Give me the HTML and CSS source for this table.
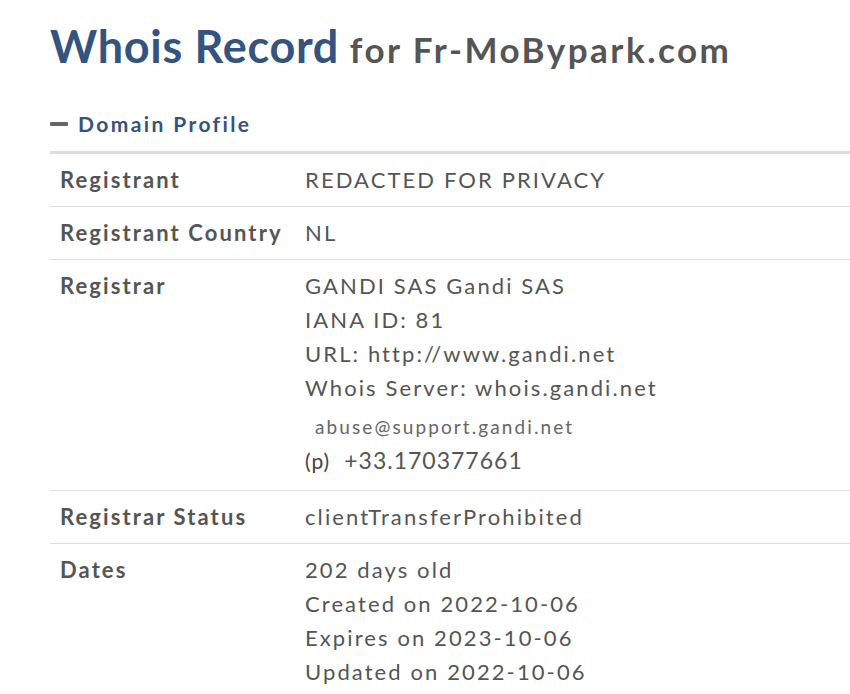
FILE: index.html
```html
<!DOCTYPE html>
<html>
<head>
<meta charset="utf-8">
<link rel="stylesheet" href="styles.css">
</head>
<body>
<div class="page">
  <h1 class="title"><span class="title-main">Whois Record</span> <span class="title-sub">for Fr-MoBypark.com</span></h1>
  <h2 class="section"><span class="minus"></span>Domain Profile</h2>
  <table class="profile">
    <tr>
      <th>Registrant</th>
      <td>REDACTED FOR PRIVACY</td>
    </tr>
    <tr>
      <th>Registrant Country</th>
      <td>NL</td>
    </tr>
    <tr>
      <th>Registrar</th>
      <td>
        <div>GANDI SAS Gandi SAS</div>
        <div>IANA ID: 81</div>
        <div>URL: http://www.gandi.net</div>
        <div>Whois Server: whois.gandi.net</div>
        <div class="img-line email">abuse@support.gandi.net</div>
        <div class="img-line phone"><span class="p">(p)</span><span class="num">+33.170377661</span></div>
      </td>
    </tr>
    <tr>
      <th>Registrar Status</th>
      <td>clientTransferProhibited</td>
    </tr>
    <tr>
      <th>Dates</th>
      <td>
        <div>202 days old</div>
        <div>Created on 2022-10-06</div>
        <div>Expires on 2023-10-06</div>
        <div>Updated on 2022-10-06</div>
      </td>
    </tr>
  </table>
</div>
</body>
</html>
```
FILE: styles.css
```css
html, body {
  margin: 0;
  padding: 0;
  background: #fff;
  overflow: hidden;
}
body {
  font-family: Lato, "Open Sans", sans-serif;
  color: #555;
}
.page {
  padding: 0 0 0 50px;
  width: 900px;
}
.title {
  margin: 0;
  padding-top: 18px;
  font-weight: 700;
  line-height: 56px;
  white-space: nowrap;
}
.title-main {
  font-size: 45px;
  color: #34537f;
  letter-spacing: 0.7px;
}
.title-sub {
  font-size: 35px;
  color: #555;
  letter-spacing: 2.5px;
  margin-left: 3px;
}
.section {
  margin: 31px 0 0;
  font-size: 21px;
  font-weight: 700;
  color: #34537f;
  letter-spacing: 2.4px;
  display: flex;
  align-items: center;
  line-height: 28px;
}
.minus {
  display: inline-block;
  width: 18px;
  height: 4px;
  background: #666;
  border-radius: 1px;
  margin-right: 10px;
}
.profile {
  margin-top: 13px;
  width: 900px;
  border-collapse: collapse;
  border-top: 3px solid #ddd;
  font-size: 22px;
  letter-spacing: 2.1px;
}
.profile tr {
  border-bottom: 1px solid #ddd;
}
.profile th, .profile td {
  text-align: left;
  vertical-align: top;
  padding: 9px 10px 9px 10px;
  line-height: 34px;
}
.profile th {
  width: 225px;
  font-weight: 700;
  color: #555;
}
.profile td {
  font-weight: 400;
  color: #555;
}
.img-line {
  letter-spacing: 0;
  color: #666;
}
.email {
  font-size: 19px;
  letter-spacing: 2.1px;
  padding: 6px 0 0 10px;
  line-height: 32px;
}
.phone {
  line-height: 34px;
  padding-bottom: 3px;
}
.phone .p {
  font-size: 21px;
  color: #444;
  margin-right: 14px;
  letter-spacing: 1px;
}
.phone .num {
  font-size: 23px;
  letter-spacing: 1px;
  color: #555;
}
```
